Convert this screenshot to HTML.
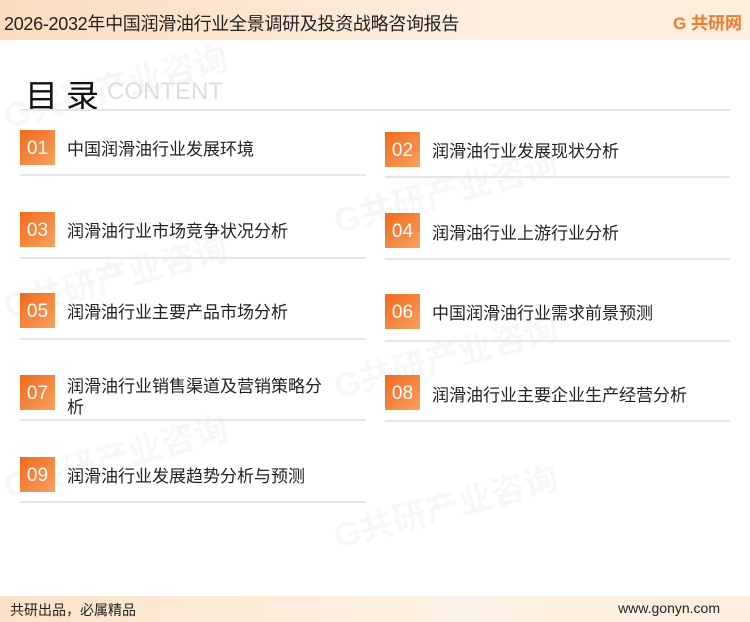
<!DOCTYPE html>
<html><head><meta charset="utf-8"><style>
*{margin:0;padding:0;box-sizing:border-box}
body{width:750px;height:622px;position:relative;background:#fff;font-family:"Liberation Sans","Noto Sans CJK SC",sans-serif;overflow:hidden}
.hd{position:absolute;left:0;top:0;width:750px;height:40px;background:linear-gradient(90deg,#fbdcc0,#fdf0e2 70%,#fdeedd)}
.hd .t{position:absolute;left:4px;top:10px;font-size:18px;color:#222;letter-spacing:-0.3px}
.logo{position:absolute;right:8px;top:9px;font-size:17px;font-weight:bold;color:#f07a2a}
.ft{position:absolute;left:0;top:596px;width:750px;height:26px;background:linear-gradient(90deg,#fce2c8,#fdf2e6 60%,#fdeede)}
.ft .a{position:absolute;left:10px;top:4px;font-size:14px;color:#222}
.ft .b{position:absolute;right:30px;top:4px;font-size:14px;color:#222}
.title{position:absolute;left:25px;top:70px;font-size:33px;color:#111;letter-spacing:8px}
.ct{position:absolute;left:107px;top:78px;font-size:24px;color:#ddd}
.hl{position:absolute;left:20px;top:109px;width:710px;height:2px;background:#e6e6e6}
.box{position:absolute;width:35px;height:35px;background:linear-gradient(135deg,#f26a1b,#f8a060);color:#fff;font-size:19px;text-align:center;line-height:37px}
.tx{position:absolute;font-size:17px;color:#222;line-height:21px}
.ln{position:absolute;height:2px;background:#e6e6e6}
.wm{position:absolute;font-size:34px;font-weight:bold;color:#f7f7f7;transform:rotate(-15deg);white-space:nowrap}
</style></head><body>
<div class="wm" style="left:0;top:60px">G共研产业咨询</div>
<div class="wm" style="left:330px;top:165px">G共研产业咨询</div>
<div class="wm" style="left:0;top:250px">G共研产业咨询</div>
<div class="wm" style="left:330px;top:330px">G共研产业咨询</div>
<div class="wm" style="left:0;top:430px">G共研产业咨询</div>
<div class="wm" style="left:330px;top:480px">G共研产业咨询</div>
<div class="hd"><div class="t">2026-2032年中国润滑油行业全景调研及投资战略咨询报告</div><div class="logo">G 共研网</div></div>
<div class="title">目录</div><div class="ct">CONTENT</div>
<div class="hl"></div>

<div class="box" style="left:20px;top:130px">01</div><div class="tx" style="left:67px;top:139px">中国润滑油行业发展环境</div><div class="ln" style="left:20px;top:174px;width:346px"></div>
<div class="box" style="left:385px;top:132px">02</div><div class="tx" style="left:432px;top:141px">润滑油行业发展现状分析</div><div class="ln" style="left:385px;top:176px;width:345px"></div>

<div class="box" style="left:20px;top:212px">03</div><div class="tx" style="left:67px;top:221px">润滑油行业市场竞争状况分析</div><div class="ln" style="left:20px;top:257px;width:346px"></div>
<div class="box" style="left:385px;top:213px">04</div><div class="tx" style="left:432px;top:223px">润滑油行业上游行业分析</div><div class="ln" style="left:385px;top:258px;width:345px"></div>

<div class="box" style="left:20px;top:293px">05</div><div class="tx" style="left:67px;top:302px">润滑油行业主要产品市场分析</div><div class="ln" style="left:20px;top:338px;width:346px"></div>
<div class="box" style="left:385px;top:294px">06</div><div class="tx" style="left:432px;top:303px">中国润滑油行业需求前景预测</div><div class="ln" style="left:385px;top:340px;width:345px"></div>

<div class="box" style="left:20px;top:375px">07</div><div class="tx" style="left:67px;top:376px;width:262px">润滑油行业销售渠道及营销策略分析</div><div class="ln" style="left:20px;top:419px;width:346px"></div>
<div class="box" style="left:385px;top:375px">08</div><div class="tx" style="left:432px;top:385px">润滑油行业主要企业生产经营分析</div><div class="ln" style="left:385px;top:420px;width:345px"></div>

<div class="box" style="left:20px;top:457px">09</div><div class="tx" style="left:67px;top:466px">润滑油行业发展趋势分析与预测</div><div class="ln" style="left:20px;top:501px;width:346px"></div>

<div class="ft"><div class="a">共研出品，必属精品</div><div class="b">www.gonyn.com</div></div>
</body></html>
